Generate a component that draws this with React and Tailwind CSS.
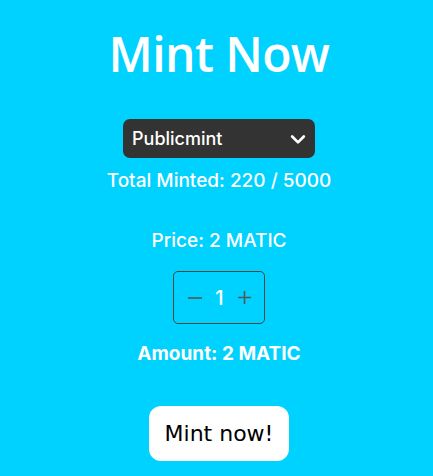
import { useState } from 'react';

export default function App() {
  const [qty, setQty] = useState(1);
  const price = 2;

  return (
    <div className="w-full min-h-[476px] bg-[#00d2ff] flex flex-col items-center pl-[5px] text-white font-['Inter',sans-serif]">
      <h1 className="mt-[26px] text-[48px] leading-[56px] font-semibold tracking-[-0.6px] font-['Open_Sans',sans-serif]">
        Mint Now
      </h1>

      <div className="mt-[37px] w-[192px] h-[39px] rounded-[7px] bg-[#333333] flex items-center justify-between pl-[9px] pr-[7px]">
        <span className="text-[18px] font-medium">Publicmint</span>
        <svg width="20" height="20" viewBox="0 0 24 24" fill="none" stroke="white" strokeWidth="3.2" strokeLinecap="round" strokeLinejoin="round">
          <path d="M5 9l7 7 7-7" />
        </svg>
      </div>

      <p className="mt-[9px] text-[19px] leading-[28px] font-medium">Total Minted: 220 / 5000</p>

      <p className="mt-[32px] text-[19px] leading-[28px] font-medium">Price: {price} MATIC</p>

      <div className="mt-[16px] w-[92px] h-[53px] rounded-[5px] border border-[#444] flex items-center justify-center gap-[12px]">
        <button type="button" onClick={() => setQty(Math.max(1, qty - 1))} className="flex items-center">
          <svg width="14" height="14" viewBox="0 0 14 14" stroke="#555" strokeWidth="1.6">
            <path d="M0 7h14" />
          </svg>
        </button>
        <span className="text-[20px] font-medium w-[12px] text-center">{qty}</span>
        <button type="button" onClick={() => setQty(qty + 1)} className="flex items-center">
          <svg width="13" height="13" viewBox="0 0 13 13" stroke="#555" strokeWidth="1.6">
            <path d="M0 6.5h13M6.5 0v13" />
          </svg>
        </button>
      </div>

      <p className="mt-[16px] text-[19px] leading-[28px] font-bold">Amount: {price * qty} MATIC</p>

      <button type="button" className="mt-[38px] w-[140px] h-[55px] bg-white rounded-[12px] text-black text-[22px] font-['DejaVu_Sans',sans-serif]">
        Mint now!
      </button>
    </div>
  );
}
